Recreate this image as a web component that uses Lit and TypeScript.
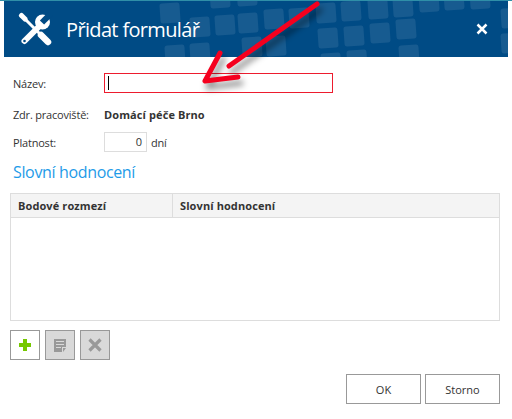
import { LitElement, html, css, svg } from "lit";
import { customElement } from "lit/decorators.js";

// Tile positions in header coordinates (header origin is page 4,1)
const tiles: [number, number][] = [
  [156, 2], [186, 16], [161, 44], [186, 42], [211, 14], [234, 12], [260, 8], [285, 7],
  [206, -13], [233, -15], [312, 2], [337, 0], [364, -2], [389, -4], [415, -9], [440, -11], [466, -12],
  [238, 36], [262, 35], [314, 27], [340, 25], [366, 22], [392, 18], [497, 7], [497, 32],
  [317, 52], [343, 49], [395, 44],
];

@customElement("app-root")
export class AppRoot extends LitElement {
  static styles = css`
    :host {
      display: block;
      width: 512px;
      height: 419px;
      position: relative;
      overflow: hidden;
      background: #fff;
      font-family: "Liberation Sans", Arial, sans-serif;
      font-size: 12px;
      color: #333;
    }
    .edge { height: 1px; background: #2f8fa8; }
    .header {
      height: 56px;
      margin: 0 4px;
      background: #004b85;
      position: relative;
      overflow: hidden;
      display: flex;
      align-items: center;
      color: #fff;
    }
    .tiles { position: absolute; inset: 0; }
    .wrench { position: absolute; left: 13px; top: 11px; width: 36px; height: 36px; }
    .title {
      position: relative;
      margin-left: 62px;
      font-family: "Open Sans", sans-serif;
      font-size: 20px;
      letter-spacing: -0.65px;
    }
    .close { position: absolute; right: 20px; top: 22px; width: 12px; height: 12px; }
    .form { padding: 16px 12px 0 13px; }
    .row { display: flex; align-items: center; }
    .label {
      width: 91px;
      font-family: "Open Sans", sans-serif;
      font-size: 11px;
      letter-spacing: -0.2px;
      color: #333;
    }
    .name { height: 20px; }
    .name-input {
      width: 229px;
      height: 20px;
      border: 1px solid #ed1c2e;
      display: flex;
      align-items: center;
      padding-left: 3px;
      box-sizing: border-box;
    }
    .caret { width: 1px; height: 14px; background: #000; }
    .org { margin-top: 11px; height: 20px; }
    .org b { font-family: "Open Sans", sans-serif; font-size: 11px; font-weight: 700; letter-spacing: 0.1px; color: #333; }
    .validity { margin-top: 8px; height: 20px; }
    .num {
      width: 41px;
      height: 18px;
      border: 1px solid #ddd;
      text-align: right;
      line-height: 18px;
      font-family: "Open Sans", sans-serif;
      font-size: 11px;
      box-sizing: content-box;
    }
    .num span { margin-right: 4px; }
    .unit { margin-left: 4px; font-family: "Open Sans", sans-serif; font-size: 11px; letter-spacing: -0.2px; }
    h2 {
      margin: 9px 0 0 0;
      font-family: "Open Sans", sans-serif;
      font-weight: 400;
      font-size: 16px;
      letter-spacing: -0.35px;
      line-height: 22px;
      color: #1e9be8;
    }
    .grid {
      margin: 10px 0 0 -3px;
      width: 490px;
      height: 128px;
      border: 1px solid #ddd;
      box-sizing: border-box;
    }
    .thead {
      height: 24px;
      display: flex;
      background: #f4f4f4;
      border-bottom: 1px solid #ddd;
      box-sizing: border-box;
      font-family: "Open Sans", sans-serif;
      font-size: 11px;
      font-weight: 700;
      letter-spacing: 0.1px;
      line-height: 23px;
    }
    .thead div { padding-left: 7px; box-sizing: border-box; }
    .c1 { width: 162px; border-right: 1px solid #ddd; }
    .tools { display: flex; gap: 5px; margin: 9px 0 0 -3px; }
    .tool {
      width: 30px;
      height: 30px;
      box-sizing: border-box;
      border: 1px solid #999;
      display: flex;
      align-items: center;
      justify-content: center;
      background: #fff;
    }
    .tool.off { background: #d9d9d9; }
    .actions { display: flex; justify-content: flex-end; gap: 4px; margin-top: 14px; }
    .btn {
      width: 75px;
      height: 30px;
      box-sizing: border-box;
      border: 1px solid #999;
      background: #fff;
      display: flex;
      align-items: center;
      justify-content: center;
      font-family: "Open Sans", sans-serif;
      font-size: 11px;
    }
    .arrow { position: absolute; left: 0; top: 0; pointer-events: none; }
  `;

  render() {
    return html`
      <div class="edge"></div>
      <div class="header">
        <svg class="tiles" width="504" height="56">
          ${tiles.map(([x, y]) => svg`<rect x=${x} y=${y} width="20" height="20" rx="2.5" fill="#fff" fill-opacity="0.09" transform="rotate(-4 ${x + 10} ${y + 10})"></rect>`)}
        </svg>
        <svg class="wrench" viewBox="0 0 36 36">
          <g fill="none" stroke="#fff" stroke-linecap="round">
            <path stroke-width="3" d="M6 5L22 21"></path>
            <path stroke-width="5" d="M4.500 3.500L8 7"></path>
            <path stroke-width="6.500" d="M24 23L31 30"></path>
            <path stroke-width="6" d="M7.500 29L24 12.500"></path>
          </g>
          <circle cx="25.500" cy="10" r="7.500" fill="#fff"></circle>
          <path stroke="#004b85" stroke-width="6" d="M25 10.500L37 -1.500"></path>
          <circle cx="7.500" cy="29" r="1.300" fill="#004b85"></circle>
        </svg>
        <div class="title">Přidat formulář</div>
        <svg class="close" viewBox="0 0 12 12"><path d="M1.500 1.500l9 9M10.500 1.500l-9 9" stroke="#fff" stroke-width="2.500"></path></svg>
      </div>
      <div class="form">
        <div class="row name">
          <div class="label">Název:</div>
          <div class="name-input"><div class="caret"></div></div>
        </div>
        <div class="row org">
          <div class="label">Zdr. pracoviště:</div>
          <b>Domácí péče Brno</b>
        </div>
        <div class="row validity">
          <div class="label">Platnost:</div>
          <div class="num"><span>0</span></div>
          <div class="unit">dní</div>
        </div>
        <h2>Slovní hodnocení</h2>
        <div class="grid">
          <div class="thead">
            <div class="c1">Bodové rozmezí</div>
            <div>Slovní hodnocení</div>
          </div>
        </div>
        <div class="tools">
          <div class="tool">
            <svg width="12" height="12" viewBox="0 0 12 12"><path fill="#76c800" d="M4 0h4v4h4v4H8v4H4V8H0V4h4z"></path></svg>
          </div>
          <div class="tool off">
            <svg width="12" height="13" viewBox="0 0 12 13">
              <path fill="#999" d="M0 0h12v8H8v5H0z"></path>
              <path stroke="#d9d9d9" stroke-width="1" d="M2 2.500h8M2 5.500h8M2 8.500h5"></path>
              <path fill="#999" d="M9 9h3l-3 4z"></path>
            </svg>
          </div>
          <div class="tool off">
            <svg width="14" height="14" viewBox="0 0 14 14"><path d="M1.500 1.500l11 11M12.500 1.500l-11 11" stroke="#999" stroke-width="3.200"></path></svg>
          </div>
        </div>
        <div class="actions">
          <div class="btn">OK</div>
          <div class="btn">Storno</div>
        </div>
      </div>
      <svg class="arrow" width="512" height="100">
        <defs>
          <filter id="s" x="-20%" y="-20%" width="140%" height="140%"><feGaussianBlur stdDeviation="3"></feGaussianBlur></filter>
        </defs>
        <g fill="none" stroke-linecap="round" stroke-linejoin="round" stroke-width="5">
          <path stroke="#000" stroke-opacity="0.45" filter="url(#s)" transform="translate(3 6)" d="M317 4L229 66M220 53L205 81L238 77"></path>
          <path stroke="#f5001e" d="M317 4L229 66M220 53L205 81L238 77"></path>
        </g>
      </svg>
    `;
  }
}
